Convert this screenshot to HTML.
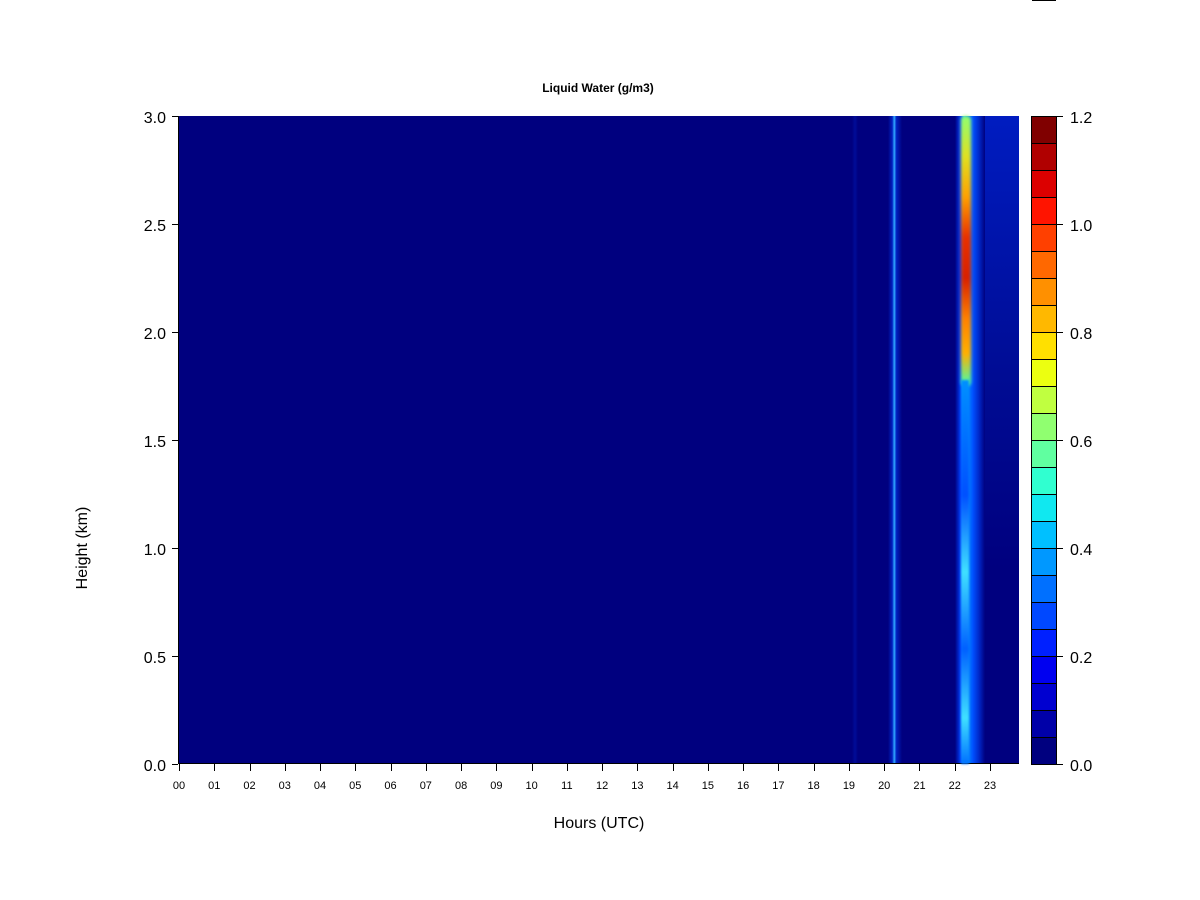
<!DOCTYPE html>
<html><head><style>
body{margin:0;width:1200px;height:900px;background:#fff;font-family:"Liberation Sans",Arial,sans-serif;position:relative;overflow:hidden}
.a{position:absolute}
.yl{position:absolute;right:1034px;font-size:16px;width:60px;text-align:right}
.xl{position:absolute;top:780px;font-size:11px;width:30px;text-align:center}
.cl{position:absolute;left:1070px;font-size:16px}
</style></head><body>
<div class="a" style="left:1032px;top:0;width:24px;height:1px;background:#000"></div>
<div class="a" style="left:0;width:1196px;top:81px;text-align:center;font-size:12px;font-weight:bold">Liquid Water (g/m3)</div>
<div class="a" style="left:178px;top:116px;width:841px;height:648px;background:#00007f;border-left:1px solid #000;border-bottom:1px solid #000;box-sizing:border-box"></div>
<!-- streaks -->
<div class="a" style="left:852px;top:116px;width:6px;height:647px;background:linear-gradient(90deg,#00007f,#000c98,#00007f)"></div>
<div class="a" style="left:888px;top:116px;width:14px;height:647px;background:linear-gradient(90deg,#00007f,#0020c0 30%,#30a8ff 45%,#0020c0 60%,#00007f)"></div>
<div class="a" style="left:955px;top:116px;width:30px;height:647px;background:linear-gradient(90deg,#00007f,#0040ff 20%,#20c0ff 30%,#0090ff 40%,#0050ff 60%,#0028c8 80%,#00007f)"></div>
<div class="a" style="left:985px;top:116px;width:34px;height:647px;background:linear-gradient(180deg,rgba(0,40,220,.7),rgba(0,30,180,.4) 40%,rgba(0,0,127,0) 70%)"></div>
<div class="a" style="left:961px;top:116px;width:10px;height:270px;background:linear-gradient(180deg,#90ff70,#e0e020 15%,#ffa000 30%,#e83000 45%,#d82000 60%,#ff8000 75%,#ffb000 88%,#40ffb0 100%);border-radius:4px;filter:blur(1.5px)"></div>
<div class="a" style="left:961px;top:380px;width:8px;height:384px;background:linear-gradient(180deg,#0090ff,#0050ff 30%,#40e0ff 50%,#0060ff 70%,#40e0ff 88%,#0070ff);filter:blur(1px)"></div>
<!-- y axis -->
<div id="yt"></div>
<div class="yl" style="top:110px">3.0</div>
<div class="yl" style="top:218px">2.5</div>
<div class="yl" style="top:326px">2.0</div>
<div class="yl" style="top:434px">1.5</div>
<div class="yl" style="top:542px">1.0</div>
<div class="yl" style="top:650px">0.5</div>
<div class="yl" style="top:758px">0.0</div>
<div class="a" style="left:23px;top:539px;width:120px;text-align:center;font-size:16px;transform:rotate(-90deg);transform-origin:center">Height (km)</div>
<div id="xt"></div>
<div class="a" style="left:0;width:1198px;top:815px;text-align:center;font-size:16px">Hours (UTC)</div>
<div id="cb" class="a" style="left:1031px;top:116px;width:26px;height:649px;border:1px solid #000;box-sizing:border-box"></div>
<div class="cl" style="top:110px">1.2</div>
<div class="cl" style="top:218px">1.0</div>
<div class="cl" style="top:326px">0.8</div>
<div class="cl" style="top:434px">0.6</div>
<div class="cl" style="top:542px">0.4</div>
<div class="cl" style="top:650px">0.2</div>
<div class="cl" style="top:758px">0.0</div>
<script>
var h='';for(var i=0;i<24;i++){var x=179+i*35.26;h+='<div class="a" style="left:'+x+'px;top:764px;width:1px;height:7px;background:#000"></div><div class="xl" style="left:'+(x-15)+'px">'+(i<10?'0':'')+i+'</div>';}
document.getElementById('xt').innerHTML=h;
var y='';for(var k=0;k<7;k++){y+='<div class="a" style="left:172px;top:'+(116+k*108)+'px;width:6px;height:1px;background:#000"></div>';}
document.getElementById('yt').innerHTML=y;
var c=['#00007f','#0000a8','#0000d0','#0000f0','#0020ff','#0048ff','#0070ff','#0098ff','#00c0ff','#10e8f0','#30ffd0','#60ffa0','#90ff70','#c0ff40','#ecff10','#ffe000','#ffb800','#ff9000','#ff6800','#ff4000','#ff1400','#dc0000','#b00000','#800000'];
var b='',g=document.getElementById('cb');
for(var j=0;j<24;j++){b+='<div style="position:absolute;left:0;width:24px;top:'+(647-(j+1)*27)+'px;height:27px;background:'+c[j]+';border-top:1px solid #000;box-sizing:border-box"></div>';}
g.innerHTML=b;
var t='';for(var k=0;k<7;k++){t+='<div class="a" style="left:1056px;top:'+(116+k*108)+'px;width:7px;height:1px;background:#000"></div>';}
document.body.insertAdjacentHTML('beforeend',t);
</script>
</body></html>
